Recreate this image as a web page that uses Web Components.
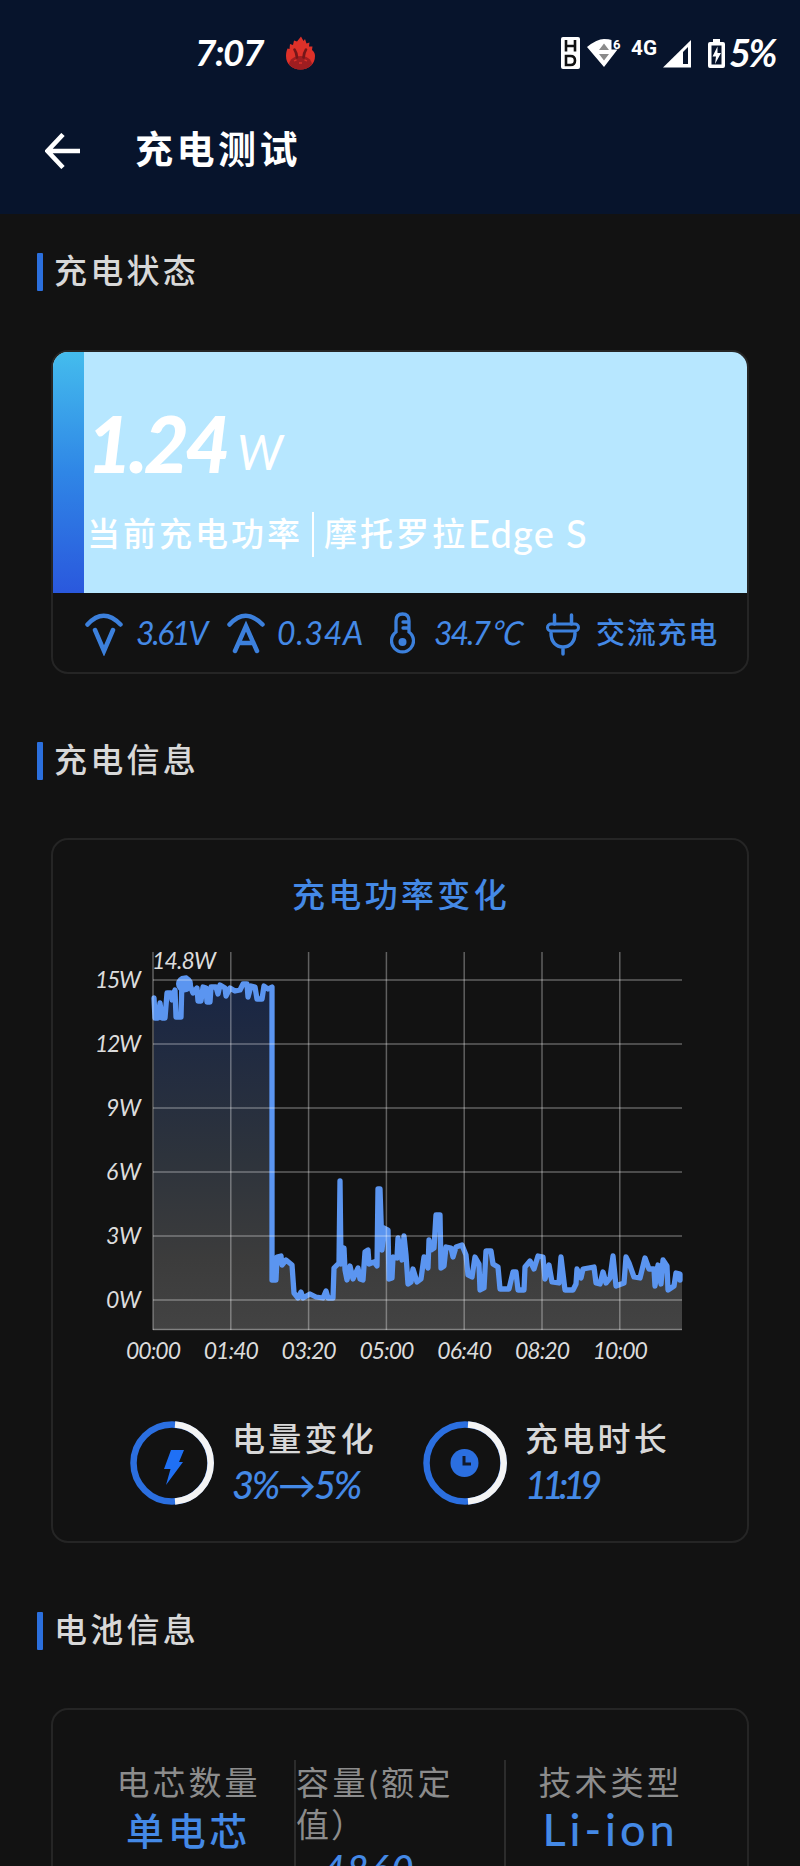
<!DOCTYPE html>
<html lang="zh-CN">
<head>
<meta charset="utf-8">
<title>充电测试</title>
<style>
  body {
    margin: 0;
    background: #121212;
    color: #d8d8d8;
    font-family: Lato, "Noto Sans CJK SC", sans-serif;
    overflow: hidden;
    height: 1866px;
  }
</style>
</head>
<body>
<charge-page></charge-page>

<script>
const define = (name, html, setup) => {
  customElements.define(name, class extends HTMLElement {
    constructor() {
      super();
      this.attachShadow({ mode: "open" }).innerHTML = html;
    }
    connectedCallback() {
      if (setup) setup.call(this, this.shadowRoot);
    }
  });
};

// Text spread over a given width: the letter spacing takes up the difference
class SpacedText extends HTMLElement {
  constructor() {
    super();
    this.attachShadow({ mode: "open" }).innerHTML = `
      <style>
        :host { display: block; white-space: nowrap; line-height: 1; flex: none; }
        span { display: inline-block; white-space: pre; line-height: inherit; }
      </style>
      <span></span>`;
  }
  connectedCallback() {
    const span = this.shadowRoot.querySelector("span");
    const text = this.getAttribute("text");
    const width = Number(this.getAttribute("width"));
    span.textContent = text;
    this.style.fontSize = this.getAttribute("size") + "px";
    const rest = width - span.getBoundingClientRect().width;
    span.style.letterSpacing = rest / text.length + "px";
    this.style.width = width + "px";
  }
}
customElements.define("spaced-text", SpacedText);

define("status-bar", `
  <style>
    :host { display: flex; align-items: center; height: 106px; padding-left: 195px; color: #fff; box-sizing: border-box; }
    svg { display: block; flex: none; }
    .time { font-style: italic; font-weight: 700; margin-top: -3px; }
    .flame { margin-left: 22px; }
    .icons { margin-left: 244px; }
    .level { margin: -3px 0 0 3px; font-style: italic; font-weight: 700; }
  </style>
  <spaced-text class="time" text="7:07" size="37" width="68"></spaced-text>
  <svg class="flame" width="31" height="34" viewBox="0 0 31 34">
    <path d="M16 0.500l2.500 4.500 1.500-2 1.500 4.500 3-1-.5 4 3.500 0-.5 3.500C29.500 16 30 18 30 20c0 8-6 13.500-14.500 13.500S1 28 1 20c0-3 .5-5 1.500-7.500l2 .5.500-5 3 1 1-4.500 3 1z" fill="#dd3129"/>
    <path d="M4 28c1-5 5-8 11.500-8S26 23 27 28c-3 4-7 5.500-11.500 5.500S7 32 4 28z" fill="#9e1d20"/>
    <path d="M9.500 13.500q2 3 2.500 8M21 13.500q-2 3-2.500 8" fill="none" stroke="#751719" stroke-width="2.600" stroke-linecap="round"/>
    <path d="M9 25l2.500-1.200M22 25l-2.500-1.200M14 27h3" stroke="#dd3129" stroke-width="1.300"/>
  </svg>
  <svg class="icons" width="166" height="34" viewBox="560 36 166 34">
    <rect x="561" y="37" width="19" height="32" rx="2" fill="#fff"/>
    <path d="M566 40v11.500M575 40v11.500M566 46h9" fill="none" stroke="#111" stroke-width="2.600"/>
    <path d="M566 56h4.500q4.500 0 4.500 4.500t-4.500 4.500h-4.500z" fill="none" stroke="#111" stroke-width="2.600"/>
    <path d="M587 47Q597 39 604 39q5 0 7.500 1v9.500h6L604 67z" fill="#fff"/>
    <path d="M604 43.500l5 6.500h-10zM604 60.500l5-6.500h-10z" fill="#8a8a8a"/>
    <text x="613" y="48.500" font-size="13" font-weight="700" fill="#fff" font-family="Roboto">6</text>
    <text x="631" y="54.500" font-size="20" font-weight="700" textLength="26" lengthAdjust="spacingAndGlyphs" fill="#fff" font-family="Roboto">4G</text>
    <path d="M663 67.500L691 40v27.500z" fill="#fff"/>
    <path d="M683 52l5-5v17h-5z" fill="#07142c"/>
    <path d="M710 42h3v-3h7v3h3q2 0 2 2v22q0 2-2 2h-13q-2 0-2-2v-22q0-2 2-2z" fill="#fff"/>
    <path d="M711.500 45.500h10v19h-10z" fill="#07142c"/>
    <path d="M717.500 46.500l-5 10h3.500l-1 7.500 6-11h-3.500z" fill="#fff"/>
  </svg>
  <spaced-text class="level" text="5%" size="38" width="46"></spaced-text>
`);

define("app-bar", `
  <style>
    :host { display: flex; align-items: center; height: 108px; padding: 0 0 18px 45px; box-sizing: border-box; color: #fff; }
    svg { flex: none; margin-right: 55px; }
    spaced-text { font-weight: 700; margin-top: -6px; }
  </style>
  <svg width="35" height="36" viewBox="0 0 35 36">
    <path d="M35 18H3M18 1.500L2.500 18L18 34.500" fill="none" stroke="#fff" stroke-width="4.600"/>
  </svg>
  <spaced-text text="充电测试" size="38" width="166"></spaced-text>
`);

define("section-title", `
  <style>
    :host { display: flex; align-items: center; height: 38px; padding-left: 37px; }
    i { width: 6px; height: 38px; margin-right: 11px; background: #2b6fdd; border-radius: 1px; }
    spaced-text { font-weight: 500; margin-top: -4px; }
  </style>
  <i></i>
`, function (root) {
  const text = document.createElement("spaced-text");
  text.setAttribute("text", this.getAttribute("text"));
  text.setAttribute("size", 33);
  text.setAttribute("width", 145);
  root.append(text);
});

define("info-card", `
  <style>
    :host { display: block; box-sizing: border-box; width: 698px; margin-left: 51px; border: 2px solid #252525; border-radius: 17px; overflow: hidden; }
  </style>
  <slot></slot>
`);

define("power-banner", `
  <style>
    :host { display: flex; height: 241px; color: #fff; background: #b7e7ff; }
    .stripe { width: 31px; background: linear-gradient(#44bced, #2f86e6 50%, #2a58dd); }
    .main { padding: 54px 0 0 3px; }
    .power { display: flex; align-items: flex-end; font-style: italic; height: 76px; }
    .value { font-weight: 900; }
    .unit { margin: 0 0 6px 10px; }
    .device { display: flex; align-items: center; margin-top: 30px; height: 45px; font-weight: 500; }
    .device i { width: 2px; height: 45px; margin: 0 10px 0 9px; background: #fff; }
    .device spaced-text { margin-top: -3px; }
  </style>
  <div class="stripe"></div>
  <div class="main">
    <div class="power">
      <spaced-text class="value" text="1.24" size="78" width="140"></spaced-text>
      <spaced-text class="unit" text="W" size="48" width="48"></spaced-text>
    </div>
    <div class="device">
      <spaced-text text="当前充电功率" size="33" width="216"></spaced-text>
      <i></i>
      <spaced-text text="摩托罗拉" size="33" width="144"></spaced-text>
      <spaced-text text="Edge S" size="38" width="120"></spaced-text>
    </div>
  </div>
`);

define("metric-row", `
  <style>
    :host { display: grid; grid-template-columns: 142px 163px 155px 1fr; align-items: center; height: 78px; padding-left: 32px; color: #4489e6; }
    div { display: flex; align-items: center; }
    svg { fill: none; stroke: #3c80dc; stroke-width: 4.500; stroke-linecap: round; flex: none; margin-top: 3px; }
    spaced-text { font-style: italic; margin-top: 1px; }
    .cjk { font-style: normal; font-weight: 500; }
  </style>
  <div>
    <svg width="38" height="44" viewBox="0 0 38 44"><path d="M2.500 12.500Q18.500-5 35.500 12.500M10 18l9 21 9-21"/></svg>
    <spaced-text style="margin-left:13px" text="3.61V" size="32" width="70"></spaced-text>
  </div>
  <div>
    <svg width="38" height="44" viewBox="0 0 38 44"><path d="M2.500 12.500Q18.500-5 35.500 12.500M8 39l11-25 11 25M13 31h12"/></svg>
    <spaced-text style="margin-left:12px" text="0.34A" size="32" width="87"></spaced-text>
  </div>
  <div>
    <svg width="25" height="44" viewBox="0 0 25 44">
      <path style="stroke-width:3.300" d="M6 20V9q0-7 6.500-7T19 9v11a11 11 0 1 1-13 0zM13 10h5M13 16h5"/>
      <circle cx="12.500" cy="30" r="4" style="fill:#3c80dc;stroke:none"/>
    </svg>
    <spaced-text style="margin-left:19px" text="34.7℃" size="32" width="85"></spaced-text>
  </div>
  <div>
    <svg width="36" height="44" viewBox="0 0 36 44">
      <path style="stroke-width:3.500" d="M9.500 3v9M26.500 3v9M18 35v7M6 21c0 9 5 14 12 14s12-5 12-14"/>
      <rect x="2.500" y="12" width="31" height="7" rx="3.500" style="stroke-width:3"/>
    </svg>
    <spaced-text class="cjk" style="margin-left:15px" text="交流充电" size="29" width="123"></spaced-text>
  </div>
`);

// Corner points of the power curve, in page pixels
const CURVE = `154,998 155,1018 158,1018 160,1003 162,1018 165,1018 167,993 171,993 172,1000 175,990
  176,1017 181,1017 182,980 186,978 190,985 193,993 197,988 198,1001 201,1001 203,987 206,988
  207,1002 210,1002 211,987 216,987 218,994 220,985 225,988 226,996 230,988 235,991 240,990
  243,984 247,984 248,997 251,986 255,987 257,999 262,999 264,986 268,989 272,987 272,1280
  276,1280 277,1257 281,1256 282,1265 286,1260 292,1265 294,1293 298,1298 301,1292 303,1298
  310,1294 316,1297 323,1298 326,1291 328,1298 333,1298 334,1268 339,1263 340,1181 341,1264
  344,1248 345,1270 347,1280 350,1266 353,1279 358,1268 360,1279 363,1280 365,1252 368,1250
  369,1264 374,1262 377,1266 378,1189 380,1189 382,1250 384,1228 388,1230 389,1279 392,1278
  393,1257 397,1258 398,1238 402,1260 404,1236 406,1255 408,1284 411,1282 413,1269 417,1282
  421,1279 424,1257 428,1268 429,1240 431,1250 434,1248 436,1215 440,1215 441,1268 444,1266
  446,1247 451,1248 453,1257 456,1247 462,1245 466,1255 468,1275 472,1277 475,1257 479,1264
  480,1290 484,1288 486,1251 491,1251 493,1264 498,1267 500,1289 509,1289 513,1272 516,1272
  518,1290 524,1290 525,1267 530,1261 534,1269 538,1256 543,1257 545,1279 549,1265 552,1282
  559,1283 561,1257 565,1290 573,1290 576,1284 577,1269 581,1278 583,1269 594,1267 596,1283
  600,1284 603,1272 606,1283 610,1278 613,1256 616,1286 624,1283 626,1257 629,1263 634,1277
  640,1278 645,1258 649,1269 654,1269 655,1286 658,1265 661,1284 663,1260 667,1266 668,1290
  674,1286 676,1273 680,1274 680,1280`;

define("power-chart", `
  <style>
    :host { display: block; }
    svg { display: block; }
    .grid { stroke: #fff; stroke-opacity: .33; stroke-width: 1.500; }
    .curve { fill: none; stroke: #5b95f0; stroke-width: 5.300; stroke-linejoin: round; stroke-linecap: round; }
    text { fill: #dcdcdc; font-size: 23px; font-style: italic; }
  </style>
  <svg width="694" height="440" viewBox="53 940 694 440">
    <defs>
      <linearGradient id="area" gradientUnits="userSpaceOnUse" x1="0" y1="980" x2="0" y2="1330">
        <stop offset="0" stop-color="#182544"/>
        <stop offset=".5" stop-color="#2d333c"/>
        <stop offset=".8" stop-color="#3c3c3c"/>
        <stop offset="1" stop-color="#434343"/>
      </linearGradient>
    </defs>
    <polygon fill="url(#area)" points="153,1330 ${CURVE} 682,1280 682,1330"/>
    <polyline class="curve" points="${CURVE}"/>
    <circle cx="184.500" cy="984" r="8.500" fill="#5b95f0"/>
    <g class="grid"></g>
    <g class="labels"></g>
  </svg>
`, function (root) {
  const svgNS = "http://www.w3.org/2000/svg";
  const line = (x1, y1, x2, y2) => {
    const el = document.createElementNS(svgNS, "path");
    el.setAttribute("d", `M${x1} ${y1}L${x2} ${y2}`);
    root.querySelector(".grid").append(el);
  };
  const label = (text, x, y, width) => {
    const el = document.createElementNS(svgNS, "text");
    el.textContent = text;
    el.setAttribute("x", x);
    el.setAttribute("y", y);
    el.setAttribute("textLength", width);
    root.querySelector(".labels").append(el);
  };
  ["15W", "12W", "9W", "6W", "3W", "0W"].forEach((text, i) => {
    const y = 980 + i * 64;
    const width = text.length === 3 ? 46 : 35;
    line(153, y, 682, y);
    label(text, 141 - width, y + 8, width);
  });
  line(153, 1329.5, 682, 1329.5);
  ["00:00", "01:40", "03:20", "05:00", "06:40", "08:20", "10:00"].forEach((text, i) => {
    const x = 153 + i * 77.8;
    line(x, 952, x, 1330);
    label(text, x - 27, 1359, 55);
  });
  label("14.8W", 152, 969, 64);
});

define("ring-stat", `
  <style>
    :host { display: flex; align-items: center; }
    svg { display: block; flex: none; margin-right: 18px; }
    .name { font-weight: 500; margin-bottom: 10px; }
    .value { font-style: italic; color: #4489e6; font-weight: 500; margin-bottom: 2px; }
  </style>
  <svg width="84" height="84" viewBox="0 0 84 84">
    <circle cx="42" cy="42" r="38.500" fill="none" stroke="#2b6fe0" stroke-width="6.500"/>
    <path d="M45 3.600a38.500 38.500 0 0 1 0 76.800" fill="none" stroke="#f4f4f4" stroke-width="6.500"/>
    <g class="symbol"></g>
  </svg>
  <div class="lines"></div>
`, function (root) {
  const symbols = {
    bolt: `<path d="M41 29h13l-5 12h4L36 64l4.500-16H34z" fill="#1f70f5"/>`,
    clock: `<circle cx="41.500" cy="42" r="14" fill="#2b6fe0"/><path d="M41 35v8h7" fill="none" stroke="#121a2c" stroke-width="3"/>`
  };
  root.querySelector(".symbol").innerHTML = symbols[this.getAttribute("symbol")];
  root.querySelector(".lines").innerHTML = `
    <spaced-text class="name" text="${this.getAttribute("name")}" size="33" width="145"></spaced-text>
    <spaced-text class="value" text="${this.getAttribute("value")}" size="38" width="${this.getAttribute("width")}"></spaced-text>`;
});

define("battery-grid", `
  <style>
    :host { display: flex; padding: 50px 0 0 30px; height: 107px; }
    div { display: flex; flex-direction: column; align-items: center; padding-top: 6px; box-sizing: border-box; height: 107px; color: #8c8c8c; }
    .cells { width: 211px; }
    .capacity { width: 212px; border: solid #2c2c2c; border-width: 0 2px; align-items: flex-start; }
    .type { flex: 1; padding-right: 32px; }
    .blue { color: #4489e6; font-weight: 500; }
  </style>
  <div class="cells">
    <spaced-text text="电芯数量" size="33" width="144"></spaced-text>
    <spaced-text class="blue" style="margin-top:12px" text="单电芯" size="38" width="125"></spaced-text>
  </div>
  <div class="capacity">
    <spaced-text text="容量(额定" size="33" width="158"></spaced-text>
    <spaced-text style="margin-top:9px" text="值）" size="33" width="70"></spaced-text>
    <spaced-text class="blue" style="margin:8px 0 0 27px;font-style:italic" text="4860" size="38" width="92"></spaced-text>
  </div>
  <div class="type">
    <spaced-text text="技术类型" size="33" width="144"></spaced-text>
    <spaced-text class="blue" style="margin-top:8px" text="Li-ion" size="45" width="136"></spaced-text>
  </div>
`);

define("charge-page", `
  <style>
    :host { display: block; width: 800px; height: 1866px; overflow: hidden; }
    header { background: #07142c; height: 214px; }
    .heading { color: #4489e6; font-weight: 500; margin: 38px 0 0 239px; }
    .stats { display: flex; padding: 41px 0 0 77px; gap: 46px; }
  </style>
  <header>
    <status-bar></status-bar>
    <app-bar></app-bar>
  </header>
  <section-title style="margin-top:39px" text="充电状态"></section-title>
  <info-card style="margin-top:59px;height:324px">
    <power-banner></power-banner>
    <metric-row></metric-row>
  </info-card>
  <section-title style="margin-top:68px" text="充电信息"></section-title>
  <info-card style="margin-top:58px;height:705px">
    <spaced-text class="heading" text="充电功率变化" size="33" width="218"></spaced-text>
    <power-chart style="margin-top:29px"></power-chart>
    <div class="stats">
      <ring-stat symbol="bolt" name="电量变化" value="3%→5%" width="128"></ring-stat>
      <ring-stat symbol="clock" name="充电时长" value="11:19" width="72"></ring-stat>
    </div>
  </info-card>
  <section-title style="margin-top:69px" text="电池信息"></section-title>
  <info-card style="margin-top:58px;height:300px">
    <battery-grid></battery-grid>
  </info-card>
`);
</script>
</body>
</html>
